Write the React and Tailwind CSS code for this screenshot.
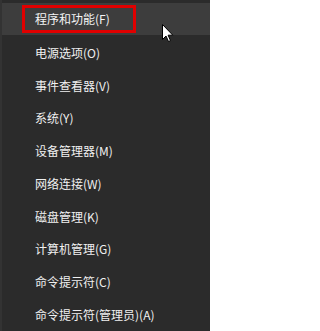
import React from "react";

const items = [
  "电源选项(O)",
  "事件查看器(V)",
  "系统(Y)",
  "设备管理器(M)",
  "网络连接(W)",
  "磁盘管理(K)",
  "计算机管理(G)",
  "命令提示符(C)",
  "命令提示符(管理员)(A)",
];

export default function App() {
  return (
    <div
      className="relative w-[210px] h-[331px] overflow-hidden bg-[#2b2b2b] flex"
      style={{ fontFamily: '"Noto Sans CJK SC", "Noto Sans", sans-serif' }}
    >
      <div className="w-[2px] bg-[#333333]" />
      <div className="flex-1 flex flex-col pt-[3px]">
        <div className="h-[32px] bg-[#3d3d3d] flex items-center pl-[20px]">
          <div className="h-[28px] w-[114px] border-[3px] border-[#e00000] flex items-center pl-[10px] text-[12px] text-[#f4f4f4] leading-none">
            程序和功能(F)
          </div>
        </div>
        <div className="h-[2px]" />
        {items.map((t) => (
          <div
            key={t}
            className="h-[33px] flex items-center pl-[33px] text-[12px] text-[#f0f0f0] leading-none"
          >
            {t}
          </div>
        ))}
      </div>
      <svg
        className="absolute left-[162px] top-[24px]"
        width="12"
        height="19"
        viewBox="0 0 12 19"
      >
        <path
          d="M0.5 0.5 L0.5 15.5 L4 12 L6.5 17.5 L8.5 16.6 L6.1 11.2 L10.8 11.2 Z"
          fill="#ffffff"
          stroke="#000000"
          strokeWidth="1"
          strokeLinejoin="miter"
        />
      </svg>
    </div>
  );
}
